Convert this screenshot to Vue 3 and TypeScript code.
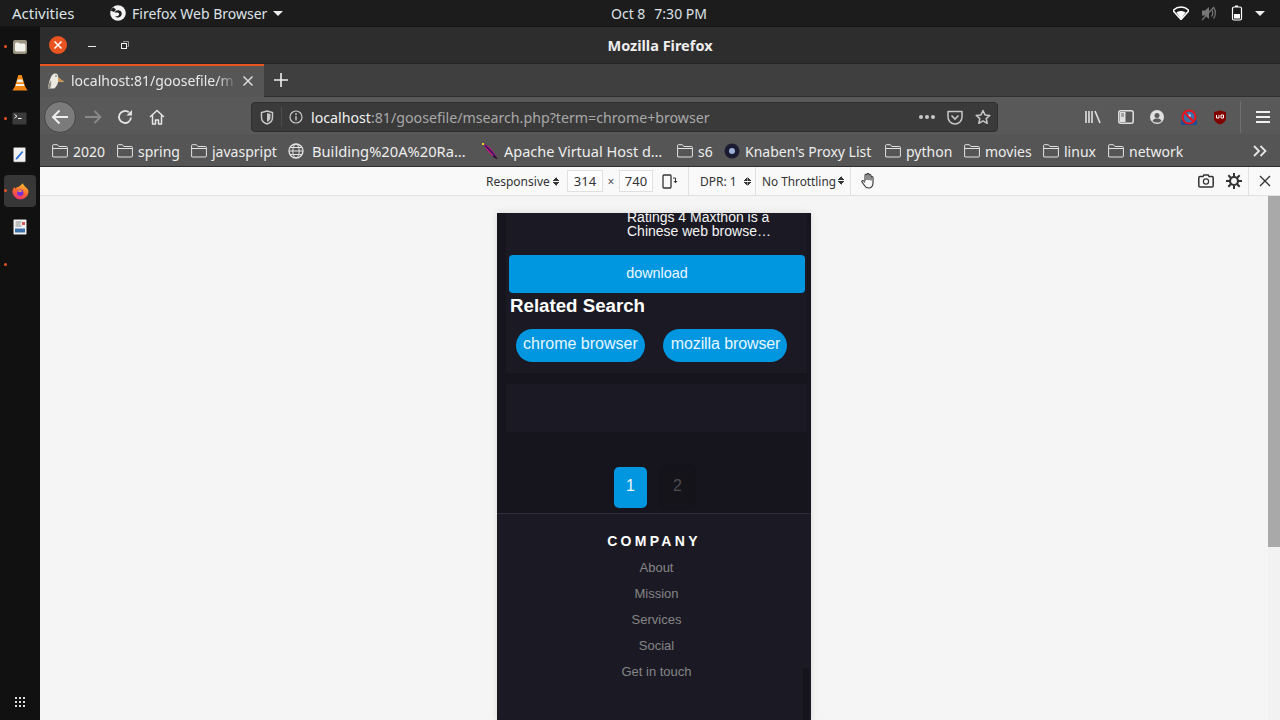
<script setup lang="ts">
interface Bookmark { label: string; kind: 'folder' | 'globe' | 'feather' | 'orb'; width: number }
const bookmarks: Bookmark[] = [
  { label: '2020', kind: 'folder', width: 65 },
  { label: 'spring', kind: 'folder', width: 74 },
  { label: 'javaspript', kind: 'folder', width: 97 },
  { label: 'Building%20A%20Ra…', kind: 'globe', width: 194 },
  { label: 'Apache Virtual Host d…', kind: 'feather', width: 195 },
  { label: 's6', kind: 'folder', width: 47 },
  { label: "Knaben's Proxy List", kind: 'orb', width: 161 },
  { label: 'python', kind: 'folder', width: 79 },
  { label: 'movies', kind: 'folder', width: 79 },
  { label: 'linux', kind: 'folder', width: 65 },
  { label: 'network', kind: 'folder', width: 88 },
]
const links: string[] = ['About', 'Mission', 'Services', 'Social', 'Get in touch']
</script>

<template>
  <div class="desktop">
    <header class="topbar">
      <span class="activities">Activities</span>
      <span class="appmenu">
        <svg width="18" height="18" viewBox="0 0 18 18"><circle cx="9" cy="9" r="7.800" fill="#f2f2f2"/><path d="M1.500 6.500L4 3.200 7 5.500 5 8z" fill="#1c1c1c"/><path d="M5.500 8.500a3.800 3.800 0 0 1 7.300 1.200 3.800 3.800 0 0 1-6.800 2.200c1.500.6 3.800.3 4.200-1.500.2-1-.8-1.900-2-1.900-1 0-2 .2-2.700 0z" fill="#1c1c1c"/></svg>
        <span>Firefox Web Browser</span>
        <i class="caret"></i>
      </span>
      <span class="clock"><span>Oct 8</span><span>7:30 PM</span></span>
      <span class="tray">
        <svg width="16" height="14" viewBox="0 0 16 14"><path d="M0 4.500C2 2.500 5 1 8 1s6 1.500 8 3.500L8 13.500z" fill="none" stroke="#fff" stroke-width="1.500" stroke-linejoin="round"/><path d="M3.500 6.500c2.500-2 6.500-2 9 0L8 13z" fill="#fff"/></svg>
        <svg width="16" height="16" viewBox="0 0 16 16"><path d="M1 5.500h3L8 2v12l-4-3.500H1z" fill="#777"/><path d="M10.500 4.500c1.500 2 1.500 5 0 7M12.500 2.500c2.500 3 2.500 8 0 11" stroke="#777" fill="none" stroke-width="1.200"/><path d="M1 15L13 2" stroke="#777" stroke-width="1.200"/></svg>
        <svg class="battery" width="12" height="16" viewBox="0 0 12 16"><path d="M4 .5h3v1.500H4z" fill="#fff"/><rect x="1.500" y="2" width="9" height="13" rx="1.500" fill="none" stroke="#fff" stroke-width="1.200"/><rect x="3" y="9" width="6" height="4.500" fill="#fff"/></svg>
        <i class="caret tray-caret"></i>
      </span>
    </header>

    <div class="workspace">
      <aside class="dock">
        <div class="dock-item running">
          <svg width="16" height="16" viewBox="0 0 16 16"><rect x="1" y="1" width="14" height="14" rx="2" fill="#9c9482"/><path d="M3 5q0-1.500 1.500-1.500h2l1 1H12q1.500 0 1.500 1.500v5q0 1.500-1.500 1.500H4.500Q3 12.500 3 11z" fill="#f3f1ec"/></svg>
        </div>
        <div class="dock-item">
          <svg width="16" height="18" viewBox="0 0 16 18"><path d="M6.300 1h3.400l3.600 12H2.700z" fill="#f08a12"/><path d="M5.500 5.500h5l.7 2.700H4.800zM4.200 10h7.600l.6 2H3.600z" fill="#f4f1ea"/><path d="M2.500 13h11l2 3.500H.5z" fill="#ef8410"/></svg>
        </div>
        <div class="dock-item running">
          <svg width="16" height="14" viewBox="0 0 16 14"><rect x=".5" y=".5" width="14" height="12" rx="1" fill="#3b3b3b"/><path d="M2.500 2.500L5 4.300 2.500 6" fill="none" stroke="#fff" stroke-width=".9"/><path d="M6 6.500h3.500" stroke="#fff"/></svg>
        </div>
        <div class="dock-item">
          <svg width="14" height="16" viewBox="0 0 14 16"><rect x=".5" y=".5" width="12" height="14.500" rx="1" fill="#f2f2f2" stroke="#777" stroke-width=".6"/><path d="M3 11l6-7 1.300 1-5.700 7-2 .7z" fill="#2a6fd6"/></svg>
        </div>
        <div class="dock-item active running">
          <svg width="17" height="17" viewBox="0 0 17 17">
            <defs><linearGradient id="fxg" x1="0.700" y1="0" x2="0.300" y2="1"><stop offset="0" stop-color="#ffc531"/><stop offset=".5" stop-color="#ff6a2a"/><stop offset="1" stop-color="#ea2f72"/></linearGradient></defs>
            <path d="M8.500 16.500A8 8 0 0 1 .6 7C1.200 5.500 2.200 4.500 3 4.300c0 .7.200 1.200.6 1.400C4.500 4.300 6 3.600 7.200 3.600 8 2.500 10 1.500 11 .3c.3 1.500 1 2.600 2.500 3.700 2 1.500 3 3 3 5a8 8 0 0 1-8 7.500z" fill="url(#fxg)"/>
            <circle cx="8.300" cy="9.800" r="3.200" fill="#7a2ed6"/><path d="M5.300 8.300c1-1.500 4-1.700 5.400.4-1.300-.5-2.200-.3-2.700.3z" fill="#ffb02a"/>
          </svg>
        </div>
        <div class="dock-item">
          <svg width="14" height="16" viewBox="0 0 14 16"><rect x=".5" y=".5" width="13" height="15" rx="1" fill="#f2f2f2" stroke="#777" stroke-width=".5"/><path d="M2.500 3h6M2.500 5h5M2.500 7h6" stroke="#8a8a8a"/><rect x="9" y="3" width="3" height="3" fill="#d9534f"/><rect x="2" y="9.500" width="10" height="4" fill="#3c6ea8"/></svg>
        </div>
        <div class="dock-item only-dot running"></div>
        <div class="dock-spacer"></div>
        <div class="apps-grid"><i v-for="n in 9" :key="n"></i></div>
      </aside>

      <section class="window">
        <div class="titlebar">
          <span class="close-btn">
            <svg width="10" height="10" viewBox="0 0 10 10"><path d="M1.500 1.500l7 7M8.500 1.500l-7 7" stroke="#fff" stroke-width="1.500"/></svg>
          </span>
          <span class="min-btn"></span>
          <svg class="max-btn" width="8" height="8" viewBox="0 0 8 8"><path d="M2.500 1.500V.5h5v5h-1" fill="none" stroke="#999"/><rect x=".5" y="2.500" width="5" height="5" fill="none" stroke="#f2f2f2"/></svg>
          <span class="title">Mozilla Firefox</span>
        </div>

        <div class="tabbar">
          <div class="tab">
            <svg class="goose" width="17" height="17" viewBox="0 0 17 17"><path d="M0 16.500C.5 12 1.500 8 3 5c1-2.500 3-4 5-3.500 1.800.5 2.200 2 2.200 4l6 4.500-6-.5c-.5 3-2 5.500-4 7z" fill="#eceae0"/><path d="M10.200 5.500l6 4.500-6-.5z" fill="#d09040"/><path d="M0 16.500c.5-4 1.500-6 3-8 .5 3 0 6-1 8z" fill="#8d8a80"/><circle cx="8" cy="4" r=".7" fill="#333"/></svg>
            <span class="tab-text">localhost:81/goosefile/m</span>
            <svg class="tab-x" width="12" height="12" viewBox="0 0 12 12"><path d="M1.500 1.500l9 9M10.500 1.500l-9 9" stroke="#dcdcdc" stroke-width="1.500"/></svg>
          </div>
          <svg class="plus" width="14" height="14" viewBox="0 0 14 14"><path d="M7 0v14M0 7h14" stroke="#f0f0f0" stroke-width="1.600"/></svg>
        </div>

        <nav class="navbar">
          <span class="back-btn">
            <svg width="18" height="16" viewBox="0 0 18 16"><path d="M17 8H2M8.500 1.500L2 8l6.500 6.500" fill="none" stroke="#eee" stroke-width="2"/></svg>
          </span>
          <span class="nav-btn">
            <svg width="17" height="14" viewBox="0 0 17 14"><path d="M0 7h15M9.500 1L15.500 7l-6 6" fill="none" stroke="#8a8a8a" stroke-width="1.800"/></svg>
          </span>
          <span class="nav-btn">
            <svg width="16" height="16" viewBox="0 0 16 16"><path d="M14 8.500A6 6 0 1 1 11.800 3.300" fill="none" stroke="#e6e6e6" stroke-width="1.800"/><path d="M9.500 6.500L15 6.500 15 1z" fill="#e6e6e6"/></svg>
          </span>
          <span class="nav-btn">
            <svg width="16" height="16" viewBox="0 0 16 16"><path d="M1 8l7-6.500L15 8M3.500 6.500V15h3v-4h3v4h3V6.500" fill="none" stroke="#e6e6e6" stroke-width="1.500" stroke-linejoin="round"/></svg>
          </span>
          <div class="urlbar">
            <svg class="url-shield" width="14" height="15" viewBox="0 0 14 15"><path d="M7 1l5.500 1.500v5c0 3-2.500 5.500-5.500 6.500-3-1-5.500-3.500-5.500-6.500v-5z" fill="none" stroke="#c8c8c8" stroke-width="1.500"/><path d="M7 3l3.500 1v3.500c0 2-1.500 3.500-3.500 4.500z" fill="#c8c8c8"/></svg>
            <span class="url-sep"></span>
            <svg class="url-info" width="14" height="14" viewBox="0 0 14 14"><circle cx="7" cy="7" r="6" fill="none" stroke="#c8c8c8" stroke-width="1.200"/><path d="M7 6v4.500" stroke="#c8c8c8" stroke-width="1.400"/><circle cx="7" cy="4" r=".9" fill="#c8c8c8"/></svg>
            <span class="url-text"><b>localhost</b>:81/goosefile/msearch.php?term=chrome+browser</span>
            <span class="dots"><i></i><i></i><i></i></span>
            <svg class="url-icon" width="16" height="15" viewBox="0 0 16 15"><path d="M1 1.500h14v5.500a7 7 0 0 1-14 0z" fill="none" stroke="#c8c8c8" stroke-width="1.500" stroke-linejoin="round"/><path d="M4.500 5.500L8 9l3.500-3.500" fill="none" stroke="#c8c8c8" stroke-width="1.600"/></svg>
            <svg class="url-icon" width="16" height="16" viewBox="0 0 16 16"><path d="M8 1.500l2 4.400 4.800.5-3.600 3.200 1 4.700L8 11.900l-4.200 2.400 1-4.700L1.200 6.400 6 5.900z" fill="none" stroke="#c8c8c8" stroke-width="1.500" stroke-linejoin="round"/></svg>
          </div>
          <div class="nav-right">
            <svg width="16" height="14" viewBox="0 0 16 14"><path d="M1 1v12M4 1v12M7 1v12M10 1l5 12" stroke="#e0e0e0" stroke-width="1.600" fill="none"/></svg>
            <svg width="16" height="14" viewBox="0 0 16 14"><rect x=".8" y=".8" width="14.400" height="12.400" rx="2" fill="none" stroke="#e0e0e0" stroke-width="1.500"/><rect x="2" y="2" width="5.500" height="10" fill="#e0e0e0"/><path d="M3 4h3M3 6h3" stroke="#666"/></svg>
            <svg width="14" height="14" viewBox="0 0 14 14"><circle cx="7" cy="7" r="7" fill="#e0e0e0"/><circle cx="7" cy="5.500" r="2.500" fill="#5a5a5a"/><path d="M2.500 11c1-2 2.500-2.500 4.500-2.500s3.500.5 4.500 2.500c-1.200 1-2.800 1.500-4.500 1.500s-3.300-.5-4.500-1.500z" fill="#5a5a5a"/></svg>
            <svg width="16" height="16" viewBox="0 0 16 16"><rect x="0" y="11" width="16" height="5" fill="#1d4f91"/><circle cx="8" cy="8" r="6.500" fill="#3f6fa8" stroke="#e8141c" stroke-width="2"/><path d="M3.500 3.500l9 9" stroke="#e8141c" stroke-width="2"/><path d="M7 5l3 1-1 2z" fill="#dfe8f2"/></svg>
            <svg width="14" height="15" viewBox="0 0 14 15"><path d="M7 .5l6 1.500v6c0 3-2.500 5.500-6 6.500-3.500-1-6-3.500-6-6.500V2z" fill="#800000"/><path d="M3.500 5v3h2.500V5M8 5v3h2.500V5H8z" fill="none" stroke="#fff" stroke-width="1"/></svg>
          </div>
          <span class="nav-sep"></span>
          <svg class="hamburger" width="14" height="12" viewBox="0 0 14 12"><path d="M0 1h14M0 6h14M0 11h14" stroke="#f0f0f0" stroke-width="2"/></svg>
        </nav>

        <div class="bookmarks">
          <span v-for="b in bookmarks" :key="b.label" class="bookmark" :style="{ width: b.width + 'px' }">
            <svg v-if="b.kind === 'folder'" width="16" height="14" viewBox="0 0 16 14"><path d="M.6 12.500V1.500q0-.8.800-.8h4l1.500 1.800h7.500q1 0 1 1v8.500q0 1-1 1H1.600q-1 0-1-1zM.6 4.500h15" fill="none" stroke="#e2e2e2" stroke-width="1"/></svg>
            <svg v-else-if="b.kind === 'globe'" width="16" height="16" viewBox="0 0 16 16"><circle cx="8" cy="8" r="7" fill="none" stroke="#e2e2e2" stroke-width="1.300"/><ellipse cx="8" cy="8" rx="3.200" ry="7" fill="none" stroke="#e2e2e2"/><path d="M1 8h14M2 4.500h12M2 11.500h12" stroke="#e2e2e2"/></svg>
            <svg v-else-if="b.kind === 'feather'" width="16" height="16" viewBox="0 0 16 16"><path d="M1 1l2 .5c5 2 9 7 12 13.500l-1 .5C9 12 4 7 1 1z" fill="#c2156e"/><path d="M3 2.500c4 3 7.500 7 11 12" stroke="#2a1a7a" stroke-width="1.300"/><path d="M11 13l4 2.500" stroke="#111" stroke-width="1.200"/><rect x="0" y="0" width="2" height="2" fill="#f5d21f"/></svg>
            <svg v-else width="16" height="16" viewBox="0 0 16 16"><circle cx="8" cy="8" r="7.500" fill="#1a1a30"/><circle cx="8" cy="8" r="3" fill="#9cb0d8"/></svg>
            <span class="bm-label" :class="'bm-' + b.kind">{{ b.label }}</span>
          </span>
          <svg class="chevrons" width="14" height="12" viewBox="0 0 14 12"><path d="M1 1l5 5-5 5M7.500 1l5 5-5 5" fill="none" stroke="#e6e6e6" stroke-width="1.800"/></svg>
        </div>

        <div class="rdm">
          <span class="rdm-select responsive">Responsive<i class="updown"></i></span>
          <span class="size-box">314</span>
          <span class="times">×</span>
          <span class="size-box">740</span>
          <svg class="rotate" width="16" height="15" viewBox="0 0 16 15"><rect x="1" y="1" width="8" height="13" rx="1" fill="none" stroke="#333" stroke-width="1.300"/><path d="M11 4h2.500v3" fill="none" stroke="#333"/><path d="M11.500 7h4l-2 2.200z" fill="#333"/></svg>
          <span class="rdm-sep first"></span>
          <span class="rdm-select dpr">DPR: 1<i class="updown"></i></span>
          <span class="rdm-sep"></span>
          <span class="rdm-select throttle">No Throttling<i class="updown"></i></span>
          <span class="rdm-sep"></span>
          <svg class="touch" width="14" height="16" viewBox="0 0 14 16"><path d="M4 8V2.200a1 1 0 0 1 2 0V7m0-1V1.500a1 1 0 0 1 2 0V7m0-4.500a1 1 0 0 1 2 0V7.500m0-3a1 1 0 0 1 2 0V10c0 3-1.500 5-4.500 5-2 0-3-.8-4-2.500L1 9c-.5-1 .8-2 1.700-1L4 9.500" fill="none" stroke="#333" stroke-width="1.100"/></svg>
          <span class="rdm-fill"></span>
          <svg width="16" height="14" viewBox="0 0 16 14"><path d="M2 2.500h3l.8-1.500h4.400l.8 1.500h3q1.200 0 1.200 1.200v8q0 1.300-1.200 1.300H2Q.8 13 .8 11.700v-8Q.8 2.500 2 2.500z" fill="none" stroke="#333" stroke-width="1.500"/><circle cx="8" cy="7.500" r="2.600" fill="none" stroke="#333" stroke-width="1.200"/></svg>
          <svg class="gear" width="16" height="16" viewBox="0 0 16 16"><circle cx="8" cy="8" r="4" fill="none" stroke="#333" stroke-width="2.200"/><path d="M8 0v3.500M8 12.500V16M0 8h3.500M12.500 8H16M2.300 2.300l2.500 2.500M11.200 11.200l2.500 2.500M13.700 2.300l-2.500 2.500M4.800 11.200l-2.500 2.500" stroke="#333" stroke-width="2"/></svg>
          <span class="rdm-sep last"></span>
          <svg class="rdm-close" width="12" height="12" viewBox="0 0 12 12"><path d="M1 1l10 10M11 1L1 11" stroke="#333" stroke-width="1.400"/></svg>
        </div>

        <div class="stage">
          <div class="stage-center">
            <div class="viewport">
              <div class="page">
                <div class="card results">
                  <p class="snippet">Ratings 4 Maxthon is a<br />Chinese web browse…</p>
                  <a class="download">download</a>
                  <h2 class="related">Related Search</h2>
                  <div class="chips">
                    <a class="chip">chrome browser</a>
                    <a class="chip">mozilla browser</a>
                  </div>
                </div>
                <div class="card empty"></div>
                <div class="pager">
                  <span class="page-btn current">1</span>
                  <span class="page-btn">2</span>
                </div>
                <footer class="footer">
                  <h4>COMPANY</h4>
                  <a v-for="l in links" :key="l">{{ l }}</a>
                </footer>
              </div>
              <span class="overlay-bar"></span>
            </div>
          </div>
          <div class="scrollbar"><span></span></div>
        </div>
      </section>
    </div>
  </div>
</template>

<style>
html, body { margin: 0; overflow: hidden; }
</style>

<style scoped>
.desktop { width: 1280px; height: 720px; display: flex; flex-direction: column; overflow: hidden; font-family: "Noto Sans", sans-serif; background: #111; }
svg { display: block; flex: none; }

.topbar { height: 27px; flex: none; background: #1c1c1c; color: #dfe3e8; font-size: 14px; display: grid; grid-template-columns: 109px 440px 1fr 107px; align-items: center; padding-left: 12px; box-sizing: border-box; border-bottom: 1px solid #141414; width: 1280px; }
.activities { white-space: nowrap; font-size: 15px; }
.appmenu { display: flex; align-items: center; gap: 5px; margin-left: -12px; white-space: nowrap; }
.caret { width: 0; height: 0; border-left: 5px solid transparent; border-right: 5px solid transparent; border-top: 5px solid #eee; margin-left: 1px; }
.clock { display: flex; gap: 9px; white-space: nowrap; margin-left: 50px; }
.tray { display: flex; align-items: center; gap: 12px; padding-right: 0; }
.battery { margin-left: 2px; }
.tray-caret { margin-left: 0; }

.workspace { flex: 1; min-height: 0; display: flex; }
.dock { width: 40px; flex: none; background: #111; display: flex; flex-direction: column; align-items: center; padding-top: 4px; box-sizing: border-box; }
.dock-item { position: relative; width: 32px; height: 32px; margin-bottom: 4px; flex: none; display: flex; align-items: center; justify-content: center; border-radius: 4px; }
.dock-item.active { background: #373737; }
.dock-item.running::before { content: ""; position: absolute; left: 0; top: 14px; width: 3px; height: 3px; border-radius: 50%; background: #e95420; }
.dock-item.only-dot { height: 36px; margin: 0; }
.dock-item.only-dot::before { top: 16px; }
.dock-spacer { flex: 1; }
.apps-grid { display: grid; grid-template-columns: repeat(3, 2px); gap: 2px; margin-bottom: 13px; }
.apps-grid i { width: 2px; height: 2px; background: #ddd; }

.window { flex: 1; min-width: 0; display: flex; flex-direction: column; }
.titlebar { height: 37px; flex: none; background: #2d2d2d; display: flex; align-items: center; position: relative; border-bottom: 1px solid #232323; box-sizing: border-box; }
.close-btn { width: 18px; height: 18px; margin-left: 9px; border-radius: 50%; background: #e95420; display: flex; align-items: center; justify-content: center; }
.min-btn { width: 8px; height: 1px; background: #eee; margin-left: 21px; margin-top: 3px; }
.max-btn { margin-left: 25px; }
.title { position: absolute; left: 0; right: 0; top: 9px; text-align: center; color: #eee; font-size: 14.500px; font-weight: 700; line-height: 18px; }

.tabbar { height: 33px; flex: none; background: #3f3f3f; display: flex; align-items: center; border-bottom: 1px solid #303030; box-sizing: border-box; }
.tab { width: 224px; height: 33px; margin-bottom: -1px; flex: none; box-sizing: border-box; background: #565656; border-top: 2px solid #e95420; display: flex; align-items: center; padding-left: 8px; padding-bottom: 2px; color: #e8e8e8; font-size: 14px; }
.tab-text { margin-left: 6px; width: 166px; overflow: hidden; white-space: nowrap; -webkit-mask-image: linear-gradient(to right, #000 88%, transparent); mask-image: linear-gradient(to right, #000 88%, transparent); }
.tab-x { margin-left: 5px; }
.plus { margin-left: 10px; }

.navbar { height: 37px; flex: none; background: #595959; display: flex; align-items: center; padding-left: 4px; padding-top: 3px; box-sizing: border-box; }
.back-btn { width: 30px; height: 30px; margin-right: 1px; border-radius: 50%; background: #7b7b7b; border: 1px solid #454545; display: flex; align-items: center; justify-content: center; flex: none; }
.nav-btn { width: 32px; display: flex; justify-content: center; flex: none; }
.urlbar { width: 747px; height: 30px; margin-left: 78px; flex: none; box-sizing: border-box; background: #3a3a3a; border: 1px solid #2e2e2e; border-radius: 4px; display: flex; align-items: center; padding-left: 8px; color: #a8a8a8; font-size: 14.200px; }
.url-sep { width: 1px; height: 20px; background: #4c4c4c; margin-left: 7px; }
.url-info { margin-left: 7px; }
.url-text { margin-left: 8px; flex: 1; white-space: nowrap; overflow: hidden; }
.url-text b { font-weight: 400; color: #f0f0f0; }
.dots { display: flex; gap: 2px; margin-right: 12px; }
.dots i { width: 4px; height: 4px; border-radius: 50%; background: #c8c8c8; }
.url-icon { margin-right: 12px; }
.url-icon:last-child { margin-right: 6px; }
.nav-right { display: flex; align-items: center; justify-content: space-between; width: 142px; margin-left: 87px; flex: none; }
.nav-sep { width: 1px; height: 32px; background: #6f6f6f; margin-left: 13px; flex: none; }
.hamburger { margin-left: 15px; }

.bookmarks { height: 33px; flex: none; background: #555; display: flex; align-items: center; padding-left: 12px; padding-top: 2px; box-sizing: border-box; border-bottom: 1px solid #2e2e2e; color: #eee; font-size: 14px; }
.bookmark { display: flex; align-items: center; flex: none; white-space: nowrap; overflow: hidden; }
.bm-label { margin-left: 5px; }
.bm-globe { margin-left: 8px; font-size: 14.700px; }
.bm-feather { font-size: 14.500px; margin-left: 6px; }
.chevrons { margin-left: 57px; }

.rdm { height: 29px; flex: none; background: #f9f9fa; border-bottom: 1px solid #e0e0e0; display: flex; align-items: center; box-sizing: border-box; padding-left: 446px; padding-right: 9px; font-size: 12px; color: #333; }
.rdm-select { display: flex; align-items: center; white-space: nowrap; position: relative; flex: none; }
.updown { display: inline-block; width: 7px; height: 9px; margin-left: 3px; background: linear-gradient(135deg, transparent 50%, #333 50%) 0 0/3.500px 4px no-repeat, linear-gradient(225deg, transparent 50%, #333 50%) 3.500px 0/3.500px 4px no-repeat, linear-gradient(45deg, transparent 50%, #333 50%) 0 5px/3.500px 4px no-repeat, linear-gradient(315deg, transparent 50%, #333 50%) 3.500px 5px/3.500px 4px no-repeat; }
.responsive { width: 81px; }
.size-box { width: 36px; height: 22px; box-sizing: border-box; border: 1px solid #e0e0e0; background: #fdfdfd; display: flex; align-items: center; justify-content: center; font-size: 13px; flex: none; }
.size-box:nth-of-type(4) { width: 34px; }
.times { width: 16px; text-align: center; color: #555; flex: none; }
.rotate { margin-left: 9px; }
.rdm-sep { width: 1px; height: 28px; background: #e0e0e0; flex: none; }
.rdm-sep.first { margin-left: 10px; }
.dpr { width: 55px; margin-left: 11px; justify-content: space-between; padding-right: 4px; box-sizing: border-box; }
.throttle { margin-left: 6px; width: 88px; font-size: 11.800px; padding-bottom: 1px; box-sizing: border-box; }
.throttle .updown { margin-left: 2px; }
.touch { margin-left: 10px; }
.rdm-fill { flex: 1; }
.gear { margin-left: 12px; }
.rdm-sep.last { margin-left: 6px; }
.rdm-close { margin-left: 10px; }

.stage { flex: 1; min-height: 0; display: flex; background: #f5f5f5; }
.stage-center { flex: 1; display: flex; justify-content: center; align-items: flex-start; padding-top: 17px; min-height: 0; overflow: hidden; }
.scrollbar { width: 12px; flex: none; background: #f2f2f2; }
.scrollbar span { display: block; height: 351px; background: #a9a9a9; }

.viewport { position: relative; width: 314px; height: 507px; overflow: hidden; flex: none; background: #16151d; box-shadow: 0 0 7px rgba(0, 0, 0, .12); font-family: "Liberation Sans", Arial, sans-serif; color: #fff; }
.page { margin-top: -3px; display: flex; flex-direction: column; }
.card { margin-left: 9px; margin-right: 4px; background: #1b1a24; }
.results { padding-left: 3px; padding-right: 2px; padding-bottom: 11px; }
.snippet { margin: 0 0 17px 118px; font-size: 14px; line-height: 14px; color: #f4f4f4; }
.download { display: block; height: 38px; line-height: 36px; background: #0096e0; border-radius: 4px; text-align: center; font-size: 14.400px; color: #eef8ff; }
.related { margin: 0; font-size: 18.700px; line-height: 26px; font-weight: 700; padding-left: 1px; }
.chips { display: flex; gap: 18px; margin-top: 10px; padding-left: 7px; }
.chip { height: 33px; line-height: 29px; padding: 0 7px; border-radius: 17px; background: #0096e0; font-size: 16px; color: #e8f6ff; }
.chip:last-child { letter-spacing: -.1px; padding: 0 7px 0 8px; }
.empty { height: 48px; margin-top: 11px; }
.pager { display: flex; justify-content: center; gap: 14px; margin-top: 35px; }
.page-btn { width: 33px; height: 41px; line-height: 38px; border-radius: 5px; text-align: center; background: #15141b; color: #4d4d4d; font-size: 16px; box-shadow: 0 0 3px rgba(0, 0, 0, .3); }
.page-btn.current { background: #0096e0; color: #eef8ff; box-shadow: none; }
.footer { margin-top: 5px; border-top: 1px solid #2e2d39; background: #1b1a24; padding: 17px 0 60px 5px; display: flex; flex-direction: column; align-items: center; }
.footer h4 { margin: 0 0 4px -5px; font-size: 14px; line-height: 20px; font-weight: 700; letter-spacing: 3.300px; }
.footer a { height: 26px; line-height: 26px; font-size: 13px; color: #858585; }
.overlay-bar { position: absolute; right: 2px; top: 455px; bottom: 0; width: 6px; background: #15141c; border-radius: 3px 3px 0 0; }
</style>
